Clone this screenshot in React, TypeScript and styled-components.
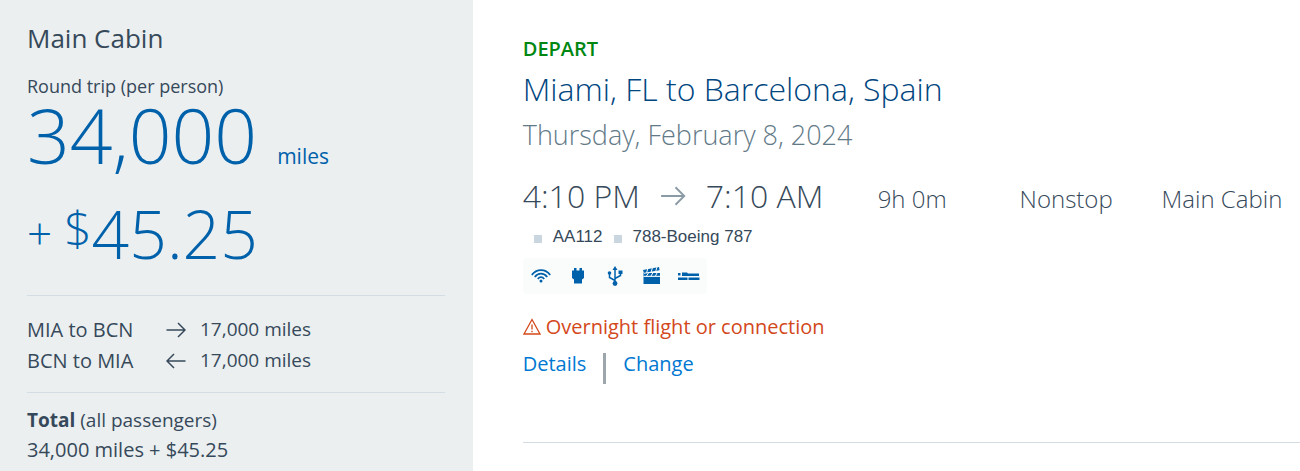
import React from "react";
import styled, { createGlobalStyle } from "styled-components";

const GlobalStyle = createGlobalStyle`
  * { box-sizing: border-box; }
  body { margin: 0; background: #fff; color: #36495a; font-family: "Open Sans", "Noto Sans", sans-serif; }
  h1, h2, h3, p, ul { margin: 0; padding: 0; font-weight: inherit; }
`;

const Page = styled.main`
  display: grid;
  grid-template-columns: 4fr 7fr;
  min-height: 100vh;
`;

const Summary = styled.aside`
  background: #ebeff0;
  padding: 22px 28px 6px 27px;
  font-size: 19px;
`;

const CabinTitle = styled.h2`
  font-size: 26px;
  line-height: 32px;
`;

const TripType = styled.p`
  margin-top: 20px;
  font-size: 18px;
  line-height: 24px;
`;

const Price = styled.p<{ $size: number }>`
  display: flex;
  align-items: baseline;
  height: 70px;
  margin-top: 2px;
  color: #0061ab;
  font-size: ${(p) => p.$size}px;
  font-weight: 300;
  line-height: 70px;
  & + & {
    margin-top: 28px;
  }
`;

const MilesUnit = styled.span`
  margin-left: 20px;
  font-size: 21px;
  font-weight: 400;
  line-height: 28px;
`;

const Plus = styled.span`
  align-self: center;
  font-size: 44px;
`;

const Currency = styled.span`
  align-self: center;
  margin-left: 12px;
  padding-bottom: 10px;
  font-size: 48px;
  line-height: 56px;
`;

const Divider = styled.hr<{ $gap: number }>`
  height: 1px;
  margin: ${(p) => p.$gap}px 0 0;
  border: 0;
  background: #d4dde4;
`;

const Fares = styled.table`
  margin-top: 18px;
  border-collapse: collapse;
  line-height: 31px;
  th, td { padding: 0; font-weight: 400; text-align: left; }
  th { min-width: 139px; font-size: 20px; }
  td svg { display: block; margin-right: 14px; }
`;

const Total = styled.p`
  line-height: 30px;
  & + & {
    font-size: 20px;
  }
`;

const TotalBlock = styled.div`
  margin-top: 12px;
`;

const Flight = styled.section`
  padding: 37px 0 0 50px;
`;

const Direction = styled.h3`
  color: #008712;
  font-size: 20px;
  font-weight: 600;
  line-height: 24px;
`;

const Route = styled.h1`
  margin-top: 5px;
  color: #00467f;
  font-size: 32px;
  font-weight: 300;
  line-height: 46px;
`;

const TravelDate = styled.p`
  color: #627a88;
  font-size: 27px;
  font-weight: 300;
  line-height: 46px;
`;

const Schedule = styled.div`
  display: grid;
  grid-template-columns: 100fr 40fr 40fr 39fr;
  align-items: baseline;
  margin-top: 16px;
  font-size: 24px;
  font-weight: 300;
  line-height: 44px;
  white-space: nowrap;
`;

const Times = styled.div`
  display: flex;
  align-items: center;
  gap: 20px;
  font-size: 32px;
`;

const Equipment = styled.ul`
  display: flex;
  gap: 11px;
  margin-top: 4px;
  padding-left: 11px;
  list-style: none;
  font: 17px/24px "Liberation Sans", Arial, sans-serif;
  li { display: flex; align-items: center; gap: 11px; }
  li::before { content: ""; width: 8px; height: 8px; margin-top: 3px; background: #c9d5df; }
`;

const Amenities = styled.ul`
  display: flex;
  width: fit-content;
  align-items: center;
  gap: 13px;
  height: 36px;
  margin-top: 9px;
  padding: 0 6px;
  border-radius: 4px;
  background: #fafcfc;
  color: #0061ab;
  list-style: none;
  li, svg { display: block; }
`;

const Warning = styled.p`
  display: flex;
  align-items: center;
  gap: 5px;
  margin-top: 18px;
  color: #d3481b;
  font-size: 20px;
  line-height: 30px;
`;

const Actions = styled.nav`
  display: flex;
  margin-top: 8px;
  font-size: 20px;
  line-height: 28px;
`;

const ActionLink = styled.a`
  color: #0078d2;
  text-decoration: none;
`;

const Separator = styled.span`
  width: 3px;
  height: 31px;
  margin: 3px 17px 0;
  background: #9da6ab;
`;

function Arrow({ width, height, back, color = "currentColor", stroke = 1.5 }: { width: number; height: number; back?: boolean; color?: string; stroke?: number }) {
  return (
    <svg width={width} height={height} viewBox="0 0 20 16" fill="none" stroke={color} strokeWidth={stroke} aria-hidden="true">
      <path d={back ? "M19.500 8H1M8 1 1 8l7 7" : "M.5 8H19M12 1l7 7-7 7"} />
    </svg>
  );
}

const amenities = [
  {
    label: "Wi-Fi",
    art: (
      <g fill="none" stroke="currentColor" strokeWidth="1.800">
        <path d="M2.800 11C7.500 4.500 16.500 4.500 21.200 11M5.800 13c3.300-4.500 9.100-4.500 12.400 0M8.800 15c1.900-2.400 4.500-2.400 6.400 0" />
        <circle cx="12" cy="17" r="1.500" fill="currentColor" stroke="none" />
      </g>
    ),
  },
  {
    label: "Power outlet",
    art: <path fill="currentColor" d="M8 4h2.500v2.500h3V4H16v2.500h2v7.500l-2 1.500v4H8v-4L6 14V6.500h2z" />,
  },
  {
    label: "USB power",
    art: (
      <g fill="none" stroke="currentColor" strokeWidth="1.500">
        <path d="M12 5v14M12 16.500 6.500 13.500V10M12 14.500l5.500-3V8" />
        <path d="M12 2l2.500 4h-5zM15.500 6.500h4v3.500h-4z" fill="currentColor" stroke="none" />
        <circle cx="6.500" cy="9" r="1.800" fill="currentColor" stroke="none" />
        <circle cx="12" cy="19.500" r="2.400" fill="currentColor" stroke="none" />
      </g>
    ),
  },
  {
    label: "Entertainment",
    art: (
      <g>
        <path fill="currentColor" d="M3.500 12.500H20V20H3.500zM3 6l16-3 .6 3.500L4 9.500zM3.500 9h16.500v3H3.500z" />
        <path stroke="#fafcfc" strokeWidth="1" fill="none" d="M4 9.300 20 6.800M4 12.300h16M8 4l-1.500 5M12.500 3.500 11 8.500M17 3l-1.500 5M8.500 9l-2 3M13 8.500l-2 3.500M17.500 8l-2 4" />
      </g>
    ),
  },
  {
    label: "Lie-flat seats",
    art: <path fill="currentColor" d="M1 9h2.500v2.500H1zM5 8.500h5l1 1h11v2.500H5zM1 13.500h9.500V16H1zM11.500 13.500h11V16h-11z" />,
  },
];

const fares = [
  { leg: "MIA to BCN", miles: "17,000 miles", back: false },
  { leg: "BCN to MIA", miles: "17,000 miles", back: true },
];

export default function App() {
  return (
    <>
      <GlobalStyle />
      <Page>
        <Summary>
          <CabinTitle>Main Cabin</CabinTitle>
          <TripType>Round trip (per person)</TripType>
          <Price $size={75}>
            34,000 <MilesUnit>miles</MilesUnit>
          </Price>
          <Price $size={66}>
            <Plus>+</Plus>
            <Currency>$</Currency>45.25
          </Price>
          <Divider $gap={27} />
          <Fares>
            <tbody>
              {fares.map((f) => (
                <tr key={f.leg}>
                  <th scope="row">{f.leg}</th>
                  <td>
                    <Arrow width={20} height={16} back={f.back} />
                  </td>
                  <td>{f.miles}</td>
                </tr>
              ))}
            </tbody>
          </Fares>
          <Divider $gap={16} />
          <TotalBlock>
            <Total>
              <b>Total</b> (all passengers)
            </Total>
            <Total>34,000 miles + $45.25</Total>
          </TotalBlock>
        </Summary>
        <Flight>
          <Direction>DEPART</Direction>
          <Route>Miami, FL to Barcelona, Spain</Route>
          <TravelDate>Thursday, February 8, 2024</TravelDate>
          <Schedule>
            <Times>
              <time>4:10 PM</time>
              <Arrow width={26} height={20} color="#8b9ba5" />
              <time>7:10 AM</time>
            </Times>
            <span>9h 0m</span>
            <span>Nonstop</span>
            <span>Main Cabin</span>
          </Schedule>
          <Equipment>
            <li>AA112</li>
            <li>788-Boeing 787</li>
          </Equipment>
          <Amenities>
            {amenities.map((a) => (
              <li key={a.label}>
                <svg width="24" height="24" viewBox="0 0 24 24" role="img" aria-label={a.label}>
                  {a.art}
                </svg>
              </li>
            ))}
          </Amenities>
          <Warning>
            <svg width="18" height="18" viewBox="0 0 18 18" fill="none" stroke="currentColor" strokeWidth="1.300" aria-hidden="true">
              <path d="M9 1.500 17 16H1zM9 6.500v5M9 12.800v1.400" />
            </svg>
            Overnight flight or connection
          </Warning>
          <Actions aria-label="Flight options">
            <ActionLink href="#details">Details</ActionLink>
            <Separator />
            <ActionLink href="#change">Change</ActionLink>
          </Actions>
          <Divider $gap={58} />
        </Flight>
      </Page>
    </>
  );
}
